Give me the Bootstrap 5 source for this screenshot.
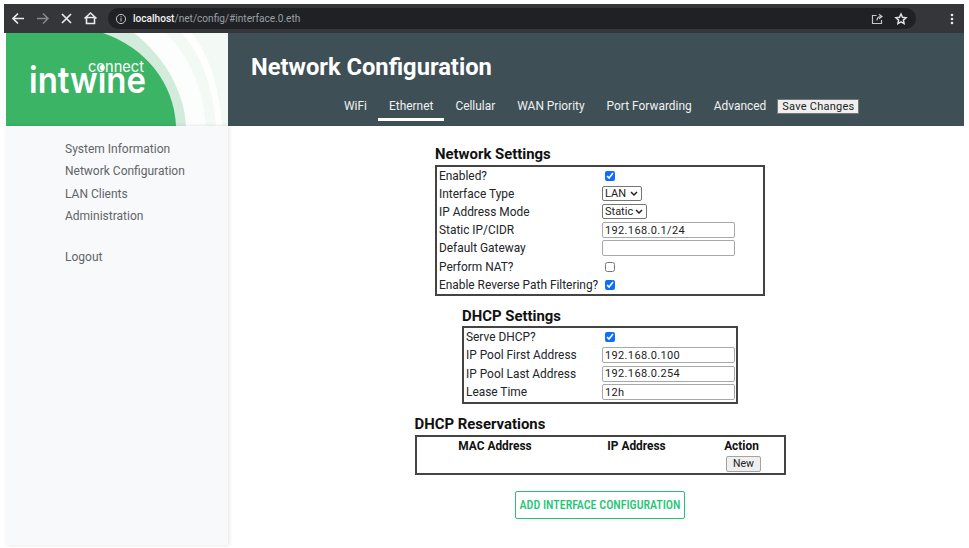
<!DOCTYPE html>
<html lang="en">
<head>
<meta charset="utf-8">
<title>Network Configuration</title>
<link href="https://cdn.jsdelivr.net/npm/bootstrap@5.3.0/dist/css/bootstrap.min.css" rel="stylesheet">
<style>
html,body{height:100%;overflow:hidden;background:#fff}
body{font-family:Roboto,"Liberation Sans",sans-serif;font-size:12px;color:#212529;padding:4px 5px 3px 4px}
.shell{height:541px;display:flex;flex-direction:column;width:960px}
.chrome-bar{height:29px;background:#35363a;display:flex;align-items:center;padding:0 10px 0 5px;flex:none}
.chrome-btn{width:19px;height:19px;margin-right:5px;display:block;flex:none}
.omni{flex:1;height:21px;margin-left:3px;margin-right:34px;background:#202124;border-radius:11px;display:flex;align-items:center;padding:0 8px 0 7px;font-size:10.1px;color:#9aa0a6;font-family:Roboto,"Liberation Sans",sans-serif}
.omni b{color:#f1f3f4;font-weight:500}
.omni svg{flex:none}
.info-ic{margin-right:6px}
.share-ic{margin-right:10px}
.top-row{height:93px;display:flex;flex:none;margin-left:2px}
.brand{width:222px;flex:none;background:#fff;display:block}
.head-panel{flex:1;background:#3f4f56;color:#fff;display:flex;flex-direction:column}
.head-title{font-size:23.7px;font-weight:700;line-height:28px;margin:20px 0 0 23px}
.tab-row{display:flex;align-items:flex-start;margin:18px 0 0 105px;font-size:11.93px}
.tab-link{color:#eef1f2;text-decoration:none;padding:0 11px 5px;line-height:14px;border-bottom:3px solid transparent;white-space:nowrap}
.tab-link.on{border-bottom-color:#fff}
.save-btn{background:#efefef;border:1px solid #767676;border-radius:0;color:#222;font-size:11px;line-height:13px;padding:0 4px;height:15px;margin:0;letter-spacing:.25px;white-space:nowrap}
.body-row{flex:1;display:flex;min-height:0;margin-left:2px}
.side-panel{width:222px;flex:none;background:#f8f9fa;box-shadow:1px 0 4px rgba(0,0,0,.12);padding:12px 0 0 59px;font-size:12px}
.side-link{display:block;color:#5f6569;text-decoration:none;line-height:22.3px;white-space:nowrap}
.side-gap{height:19px}
.main-pane{flex:1;display:flex;flex-direction:column;align-items:center;padding:20px 0 0 8px;min-width:0}
.sect{display:flex;flex-direction:column;align-items:flex-start}
.sect-title{font-size:14.9px;font-weight:700;line-height:17px;margin:0 0 1px;color:#111}
.title-wide{margin-bottom:2px}
.form-box{border:2px solid #444;border-collapse:separate;border-spacing:0;font-size:11.9px;line-height:14px}
.form-box td{padding:0 0 1px;height:18.2px;vertical-align:middle;white-space:nowrap}
.form-box td.lbl{padding-left:2px}
.net-box{width:330px}
.net-box td.lbl{width:165px}
.dhcp-box{width:276px}
.dhcp-box tr{height:18.4px}
.dhcp-box td.lbl{width:138px}
.txt-in{width:133px;height:16px;border:1px solid #a8a8a8;border-radius:2px;padding:0 2px;font-size:11px;line-height:14px;letter-spacing:.35px;font-family:Roboto,sans-serif;display:block;color:#222;background:#fff}
.sel-in{appearance:none;-webkit-appearance:none;height:15px;border:1px solid #767676;border-radius:2px;font-size:11px;line-height:13px;padding:0 0 0 2px;font-family:Roboto,sans-serif;color:#222;display:block;background:#fff url("data:image/svg+xml,%3Csvg xmlns='http://www.w3.org/2000/svg' width='8' height='6'%3E%3Cpath d='M1 1l3 3 3-3' fill='none' stroke='%23222' stroke-width='1.5'/%3E%3C/svg%3E") no-repeat right 3px center}
.sel-lan{width:40px}
.sel-static{width:45px}
.chk-in{width:10px;height:10px;margin:0 0 0 3px;display:block;accent-color:#0d6efd}
.res-box{width:371px;border:2px solid #444;display:grid;grid-template-columns:157px 126px 1fr;height:40px;font-size:11.9px}
.res-head{font-weight:700;text-align:center;line-height:14px;padding-top:2px;color:#111}
.new-btn{display:block;margin:3px auto 0;background:#efefef;border:1px solid #a3a3a3;border-radius:2px;font-size:10.5px;line-height:12px;height:16px;width:35px;padding:0;color:#222;position:relative;left:2px}
.add-btn{width:170px;height:28px;border:1px solid #21c275;border-radius:2px;color:#1ac773;background:#fff;font-size:12px;font-weight:500;font-stretch:condensed;line-height:26px;padding:0;text-align:center;text-transform:uppercase;white-space:nowrap;margin-top:16px}
.gap-a{margin-top:12px}.gap-b{margin-top:12px}
</style>
</head>
<body>
<div class="shell">
  <div class="chrome-bar">
    <svg class="chrome-btn" viewBox="0 0 19 19" fill="none" stroke="#e8eaed" stroke-width="1.7"><path d="M15 9.500H4M9 4.500l-5 5 5 5"/></svg>
    <svg class="chrome-btn" viewBox="0 0 19 19" fill="none" stroke="#85888c" stroke-width="1.5"><path d="M4 9.500h11M10 4.500l5 5-5 5"/></svg>
    <svg class="chrome-btn" viewBox="0 0 19 19" fill="none" stroke="#e8eaed" stroke-width="1.7"><path d="M5 5l9 9M14 5l-9 9"/></svg>
    <svg class="chrome-btn" viewBox="0 0 19 19" fill="none" stroke="#e8eaed" stroke-width="1.6"><path d="M3.500 9.500L9.500 4l6 5.500M5.500 8.500v6h8v-6z"/></svg>
    <div class="omni">
      <svg width="12" height="12" viewBox="0 0 12 12" fill="none" stroke="#c4c7c9" class="info-ic"><circle cx="6" cy="6" r="4.600"/><path d="M6 5.200v3.300M6 3.200v1.200"/></svg>
      <span><b>localhost</b>/net/config/#interface.0.eth</span>
      <span class="flex-grow-1"></span>
      <svg width="14" height="14" viewBox="0 0 14 14" fill="none" stroke="#c4c7c9" stroke-width="1.200" class="share-ic"><path d="M11.500 8v3.500h-9v-8h4M7 8.500c0-2.500 1.500-4 4-4M9 2.200l3 2.300-3 2.300"/></svg>
      <svg width="14" height="14" viewBox="0 0 14 14" fill="none" stroke="#dfe1e5" stroke-width="1.500"><path d="M7 2l1.500 3.300 3.500.4-2.600 2.400.7 3.500L7 9.900l-3.100 1.700.7-3.500L2 5.700l3.500-.4z"/></svg>
    </div>
    <svg width="4" height="14" viewBox="0 0 4 14" fill="#e8eaed"><circle cx="2" cy="3" r="1.300"/><circle cx="2" cy="7" r="1.300"/><circle cx="2" cy="11" r="1.300"/></svg>
  </div>
  <div class="top-row">
    <svg class="brand" viewBox="0 0 222 93" role="img" aria-label="Intwine Connect">
      <rect width="222" height="93" fill="#f3faf5"/>
      <path d="M128 0H160C185 25 198 60 200 93H180C178 60 160 25 128 0Z" fill="#fbfefc"/>
      <path d="M176 0H186C205 25 214 60 216 93H210C208 60 198 25 176 0Z" fill="#fff"/>
      <path d="M97 0H128C160 25 178 60 180 93H0V0Z" fill="#d3ebdb"/>
      <path d="M97 0C140 15 168 50 170 93H0V0Z" fill="#3bb465"/>
      <text x="23" y="60" fill="#fff" font-family="Inter,Roboto,sans-serif" font-weight="600" font-size="37" textLength="117" lengthAdjust="spacingAndGlyphs">intwine</text>
      <text x="82" y="39" fill="#fff" font-family="Inter,Roboto,sans-serif" font-size="15" textLength="56" lengthAdjust="spacingAndGlyphs">connect</text>
    </svg>
    <div class="head-panel">
      <h1 class="head-title">Network Configuration</h1>
      <nav class="tab-row">
        <a class="tab-link" href="#">WiFi</a>
        <a class="tab-link on" href="#">Ethernet</a>
        <a class="tab-link" href="#">Cellular</a>
        <a class="tab-link" href="#">WAN Priority</a>
        <a class="tab-link" href="#">Port Forwarding</a>
        <a class="tab-link" href="#">Advanced</a>
        <button class="save-btn" type="button">Save Changes</button>
      </nav>
    </div>
  </div>
  <div class="body-row">
    <aside class="side-panel">
      <a class="side-link" href="#">System Information</a>
      <a class="side-link" href="#">Network Configuration</a>
      <a class="side-link" href="#">LAN Clients</a>
      <a class="side-link" href="#">Administration</a>
      <div class="side-gap"></div>
      <a class="side-link" href="#">Logout</a>
    </aside>
    <main class="main-pane">
      <section class="sect">
        <h2 class="sect-title title-wide">Network Settings</h2>
        <table class="form-box net-box"><tbody>
          <tr><td class="lbl">Enabled?</td><td><input class="chk-in" type="checkbox" checked></td></tr>
          <tr><td class="lbl">Interface Type</td><td><select class="sel-in sel-lan"><option>LAN</option></select></td></tr>
          <tr><td class="lbl">IP Address Mode</td><td><select class="sel-in sel-static"><option>Static</option></select></td></tr>
          <tr><td class="lbl">Static IP/CIDR</td><td><input class="txt-in" type="text" value="192.168.0.1/24"></td></tr>
          <tr><td class="lbl">Default Gateway</td><td><input class="txt-in" type="text"></td></tr>
          <tr><td class="lbl">Perform NAT?</td><td><input class="chk-in" type="checkbox"></td></tr>
          <tr><td class="lbl">Enable Reverse Path Filtering?</td><td><input class="chk-in" type="checkbox" checked></td></tr>
        </tbody></table>
      </section>
      <section class="sect gap-a">
        <h2 class="sect-title">DHCP Settings</h2>
        <table class="form-box dhcp-box"><tbody>
          <tr><td class="lbl">Serve DHCP?</td><td><input class="chk-in" type="checkbox" checked></td></tr>
          <tr><td class="lbl">IP Pool First Address</td><td><input class="txt-in" type="text" value="192.168.0.100"></td></tr>
          <tr><td class="lbl">IP Pool Last Address</td><td><input class="txt-in" type="text" value="192.168.0.254"></td></tr>
          <tr><td class="lbl">Lease Time</td><td><input class="txt-in" type="text" value="12h"></td></tr>
        </tbody></table>
      </section>
      <section class="sect gap-b">
        <h2 class="sect-title title-wide">DHCP Reservations</h2>
        <div class="res-box">
          <div class="res-head">MAC Address</div>
          <div class="res-head">IP Address</div>
          <div class="res-head">Action<button class="new-btn" type="button">New</button></div>
        </div>
      </section>
      <button class="add-btn" type="button">Add Interface Configuration</button>
    </main>
  </div>
</div>
<script src="https://cdn.jsdelivr.net/npm/bootstrap@5.3.0/dist/js/bootstrap.bundle.min.js"></script>
</body>
</html>
